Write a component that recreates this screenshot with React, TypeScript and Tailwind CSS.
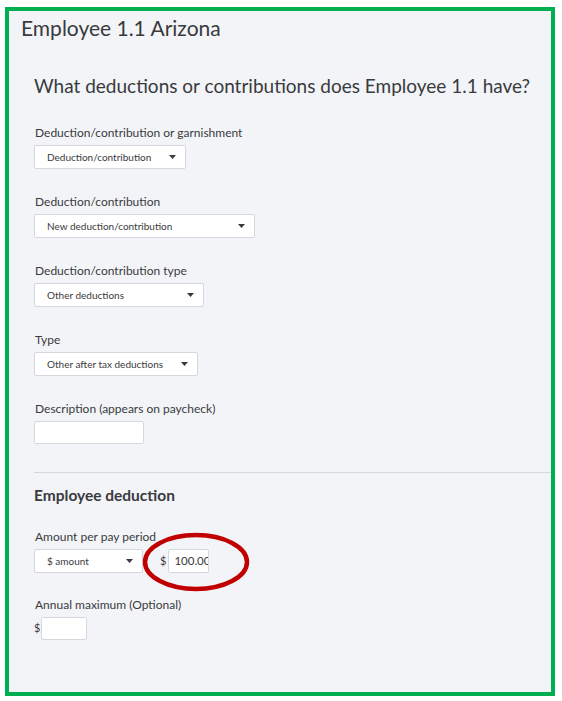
import React from "react";

const font = { fontFamily: "Lato, 'Open Sans', sans-serif" };

function Select({ value, width }: { value: string; width: string }) {
  return (
    <div
      className={`flex h-6 items-center justify-between rounded-[2px] border border-[#d4d7dc] bg-white pl-3 pr-[9px] text-[10px] text-[#393a3d] ${width}`}
    >
      <span>{value}</span>
      <svg width="7" height="4" viewBox="0 0 7 4" className="fill-[#393a3d]">
        <path d="M0 0h7L3.5 4z" />
      </svg>
    </div>
  );
}

function Field({ label, children, top }: { label: string; children: React.ReactNode; top: string }) {
  return (
    <div className={`flex flex-col ${top}`}>
      <span className="mb-[5px] pl-px text-[12px] leading-[14px] text-[#393a3d]">{label}</span>
      {children}
    </div>
  );
}

export default function App() {
  return (
    <div className="h-[701px] w-[562px] bg-white pl-[5px] pt-[7px]" style={font}>
      <div className="flex h-[689px] w-[550px] flex-col border-4 border-[#00b050] bg-[#f3f4f8]">
        <h1 className="ml-[12px] mt-[5px] text-[21px] leading-6 text-[#393a3d]">Employee 1.1 Arizona</h1>
        <div className="flex flex-col pl-[25px]">
          <h2 className="mt-[34px] text-[19px] leading-6 text-[#393a3d]">
            What deductions or contributions does Employee 1.1 have?
          </h2>
          <Field label="Deduction/contribution or garnishment" top="mt-[28px]">
            <Select value="Deduction/contribution" width="w-[152px]" />
          </Field>
          <Field label="Deduction/contribution" top="mt-[26px]">
            <Select value="New deduction/contribution" width="w-[221px]" />
          </Field>
          <Field label="Deduction/contribution type" top="mt-[26px]">
            <Select value="Other deductions" width="w-[170px]" />
          </Field>
          <Field label="Type" top="mt-[26px]">
            <Select value="Other after tax deductions" width="w-[164px]" />
          </Field>
          <Field label="Description (appears on paycheck)" top="mt-[26px]">
            <div className="h-[23px] w-[110px] rounded-[2px] border border-[#d4d7dc] bg-white" />
          </Field>
        </div>
        <div className="ml-[25px] mt-[28px] border-t border-[#d4d7dc]" />
        <div className="flex flex-col pl-[25px]">
          <h3 className="mt-[12px] text-[15.5px] font-bold leading-5 text-[#393a3d]">Employee deduction</h3>
          <Field label="Amount per pay period" top="mt-[25px]">
            <div className="flex items-center">
              <Select value="$ amount" width="w-[109px]" />
              <span className="ml-[17px] text-[11px] text-[#393a3d]">$</span>
              <div className="relative ml-[2px]">
                <div className="flex h-6 w-[41px] items-center overflow-hidden whitespace-nowrap rounded-[2px] border border-[#d4d7dc] bg-white pl-[5px] text-[11.5px] text-[#393a3d]">
                  100.00
                </div>
                <svg
                  width="110"
                  height="62"
                  viewBox="0 0 110 62"
                  className="pointer-events-none absolute left-[-27px] top-[-18px]"
                >
                  <ellipse cx="55" cy="31" rx="51" ry="27" fill="none" stroke="#c00000" strokeWidth="4.5" />
                </svg>
              </div>
            </div>
          </Field>
          <Field label="Annual maximum  (Optional)" top="mt-[25px]">
            <div className="flex items-center">
              <span className="text-[11px] text-[#393a3d]">$</span>
              <div className="ml-px h-[23px] w-[46px] rounded-[2px] border border-[#d4d7dc] bg-white" />
            </div>
          </Field>
        </div>
      </div>
    </div>
  );
}
